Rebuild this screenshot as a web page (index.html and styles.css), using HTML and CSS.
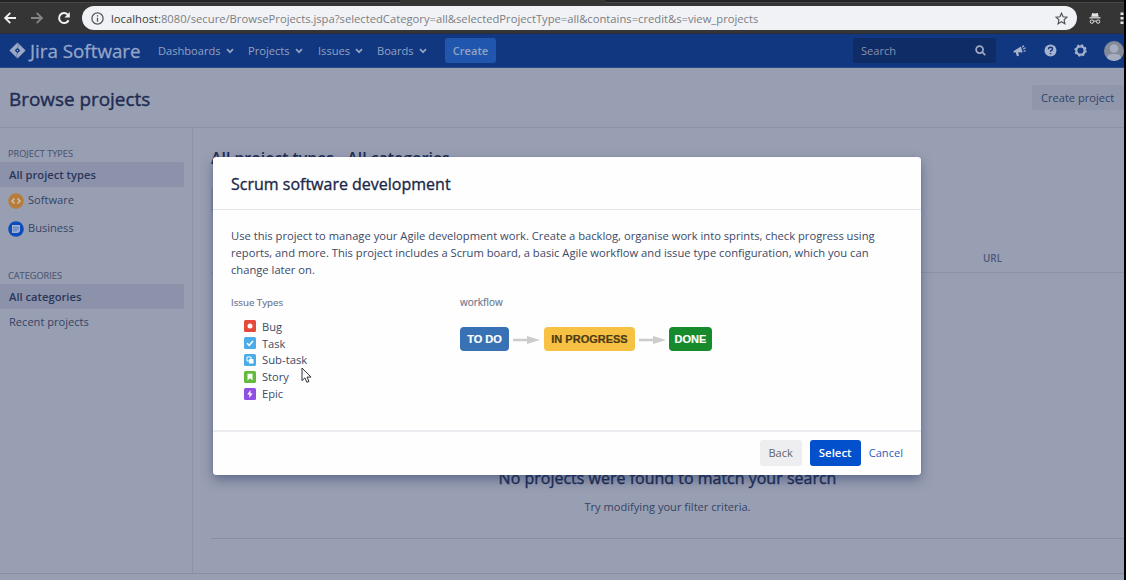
FILE: index.html
```html
<!DOCTYPE html>
<html lang="en">
<head>
<meta charset="utf-8">
<title>Browse projects - Jira Software</title>
<link rel="stylesheet" href="styles.css">
</head>
<body>
<div class="screen">
  <div class="tabs"><div class="active-tab"></div></div>
  <div class="browser">
    <svg class="nav-arrow" width="14" height="14" viewBox="0 0 14 14"><path d="M13 7H2.5M7.3 1.8L2.1 7l5.2 5.2"/></svg>
    <svg class="nav-arrow nav-forward" width="14" height="14" viewBox="0 0 14 14"><path d="M1 7h10.5M6.7 1.8L11.9 7l-5.2 5.2"/></svg>
    <svg class="nav-arrow nav-reload" width="14" height="14" viewBox="0 0 14 14"><path d="M11.6 9.2A5 5 0 1 1 10.7 3.6"/><path class="reload-tip" d="M12.8 1v5.4H7.4z"/></svg>
    <div class="address">
      <svg class="info" width="13" height="13" viewBox="0 0 13 13"><circle cx="6.5" cy="6.5" r="5.6"/><path d="M6.5 5.7v4M6.5 3.2v1.4"/></svg>
      <span class="url"><span class="url-host">localhost:</span>8080/secure/BrowseProjects.jspa?selectedCategory=all&amp;selectedProjectType=all&amp;contains=credit&amp;s=view_projects</span>
      <svg class="star" width="13" height="13" viewBox="0 0 13 13"><path d="M6.5 1.2l1.6 3.6 3.9.4-2.9 2.6.8 3.9-3.4-2-3.4 2 .8-3.9L1 5.2l3.9-.4z"/></svg>
    </div>
    <svg class="incognito" width="12" height="13" viewBox="0 0 12 13"><path d="M3.2 1l2.8.6L8.8 1l1 3.7H2.2z"/><path d="M.5 5.200h11v1.200H.5z"/><g fill="none" stroke="#e4e4e6"><circle cx="2.900" cy="9.600" r="1.700"/><circle cx="9.100" cy="9.600" r="1.700"/><path d="M4.600 9.300q1.400-.8 2.800 0"/></g></svg>
    <svg class="kebab" width="4" height="14" viewBox="0 0 4 14"><path d="M.5 1.500h3v2.500h-3zM.5 6h3v2.500h-3zM.5 10.500h3v2.500h-3z"/></svg>
  </div>

  <div class="topnav">
    <svg class="logo" width="17" height="17" viewBox="0 0 17 17"><path fill-rule="evenodd" d="M8.500.4L16.600 8.500 8.500 16.600.4 8.500zM8.500 5.700L5.700 8.500l2.800 2.800 2.800-2.800z"/><path d="M8.500 7.600l.9.9-.9.9-.9-.9z"/><path class="logo-cut" d="M8.500 1.200q2 2.600 0 4.800M8.500 15.800q-2-2.600 0-4.800"/></svg>
    <span class="brand">Jira Software</span>
    <span class="menu menu-dashboards">Dashboards<svg width="8" height="6" viewBox="0 0 8 6"><path d="M1 1.200l3 3 3-3"/></svg></span>
    <span class="menu menu-projects">Projects<svg width="8" height="6" viewBox="0 0 8 6"><path d="M1 1.200l3 3 3-3"/></svg></span>
    <span class="menu menu-issues">Issues<svg width="8" height="6" viewBox="0 0 8 6"><path d="M1 1.200l3 3 3-3"/></svg></span>
    <span class="menu menu-boards">Boards<svg width="8" height="6" viewBox="0 0 8 6"><path d="M1 1.200l3 3 3-3"/></svg></span>
    <span class="create">Create</span>
    <div class="search"><span>Search</span><svg width="11" height="11" viewBox="0 0 11 11"><circle cx="4.600" cy="4.600" r="3.500"/><path d="M7.200 7.200l3 3"/></svg></div>
    <svg class="tool feedback" width="13" height="13" viewBox="0 0 13 13"><path d="M.4 7.200L8 2.400l1.600 6.200-4.400-.3.800 3.500-2 .4-1.400-4-1.700.5z"/><path class="rays" d="M9.300 3.300l1.500-1.800M10.200 5l2.400-1.300M10.600 6.800l2 .1"/></svg>
    <svg class="tool help" width="13" height="13" viewBox="0 0 13 13"><circle cx="6.500" cy="6.500" r="6"/><path class="query" d="M4.500 5.200q0-1.900 2-1.900t2 1.700q0 1-1.200 1.500-.8.400-.8 1.300M6.500 8.900v1.400"/></svg>
    <svg class="tool gear" width="13" height="13" viewBox="0 0 13 13"><circle cx="6.500" cy="6.500" r="4.200"/><circle class="teeth" cx="6.500" cy="6.500" r="5.500"/></svg>
    <svg class="avatar" width="20" height="20" viewBox="0 0 20 20"><circle class="avatar-bg" cx="10" cy="10" r="10"/><circle cx="10" cy="7.500" r="4.300"/><path d="M2.800 16.900q.8-4 5.200-4h4q4.400 0 5.200 4Q14 20 10 20t-7.200-3.100z"/></svg>
  </div>

  <div class="page-head">
    <h1>Browse projects</h1>
    <span class="create-project">Create project</span>
  </div>

  <div class="columns">
    <div class="sidebar">
      <div class="group">PROJECT TYPES</div>
      <div class="entry current">All project types</div>
      <div class="entry typed"><svg width="16" height="16" viewBox="0 0 16 16"><circle cx="8" cy="8" r="7.800" fill="#b67d3c"/><path class="glyph" d="M6.500 5.500L4 8l2.500 2.500M9.500 5.500L12 8l-2.500 2.500"/></svg>Software</div>
      <div class="entry typed business"><svg width="16" height="16" viewBox="0 0 16 16"><circle cx="8" cy="8" r="7.800" fill="#0b4dbb"/><path d="M4 4h8v6.200L10 12H4z" fill="#a2afcf"/><path d="M5 6.200h6M5 8h6M5 9.800h4" stroke="#2a5cb8" stroke-width=".6"/></svg>Business</div>
      <div class="group categories">CATEGORIES</div>
      <div class="entry current">All categories</div>
      <div class="entry recent">Recent projects</div>
    </div>
    <div class="main">
      <h2>All project types - All categories</h2>
      <div class="filter"></div>
      <div class="table-head"><span>URL</span></div>
      <div class="empty">
        <div class="empty-title">No projects were found to match your search</div>
        <div class="empty-hint">Try modifying your filter criteria.</div>
      </div>
    </div>
  </div>
  <div class="footer"></div>

  <div class="dialog">
    <div class="dialog-head">Scrum software development</div>
    <div class="dialog-body">
      <p>Use this project to manage your Agile development work. Create a backlog, organise work into sprints, check progress using<br>reports, and more. This project includes a Scrum board, a basic Agile workflow and issue type configuration, which you can<br>change later on.</p>
      <div class="details">
        <div class="types">
          <div class="label label-types">Issue Types</div>
          <ul>
            <li><svg width="12" height="12" viewBox="0 0 12 12"><rect width="12" height="12" rx="1.500" fill="#e5493a"/><circle cx="6" cy="6" r="2.500" fill="#fff"/></svg>Bug</li>
            <li><svg width="12" height="12" viewBox="0 0 12 12"><rect width="12" height="12" rx="1.500" fill="#4bade8"/><path d="M3 6.200l2.200 2.100L9 3.900" fill="none" stroke="#fff" stroke-width="1.500"/></svg>Task</li>
            <li class="subtask"><svg width="12" height="12" viewBox="0 0 12 12"><rect width="12" height="12" rx="1.500" fill="#4bade8"/><path d="M5 7H3V3h4v2" fill="none" stroke="#fff"/><rect x="5" y="5" width="4.500" height="4.500" rx=".6" fill="#fff"/></svg>Sub-task</li>
            <li><svg width="12" height="12" viewBox="0 0 12 12"><rect width="12" height="12" rx="1.500" fill="#63ba3c"/><path d="M3.500 2.800h5v6.700L6 7.200 3.500 9.500z" fill="#fff"/></svg>Story</li>
            <li><svg width="12" height="12" viewBox="0 0 12 12"><rect width="12" height="12" rx="1.500" fill="#904ee2"/><path d="M6.600 2L3.200 6.600h2.300L5.200 10l3.600-4.600H6.400z" fill="#fff"/></svg>Epic</li>
          </ul>
        </div>
        <div class="workflow">
          <div class="label label-flow">workflow</div>
          <div class="flow">
            <span class="status todo">TO DO</span>
            <svg width="27" height="8" viewBox="0 0 27 8"><path d="M0 2.700h14V0l13 4-13 4V5.300H0z"/></svg>
            <span class="status progress">IN PROGRESS</span>
            <svg width="27" height="8" viewBox="0 0 27 8"><path d="M0 2.700h14V0l13 4-13 4V5.300H0z"/></svg>
            <span class="status done">DONE</span>
          </div>
        </div>
      </div>
    </div>
    <div class="dialog-foot">
      <span class="btn back">Back</span>
      <span class="btn select">Select</span>
      <span class="cancel">Cancel</span>
    </div>
  </div>
  <svg class="pointer" width="11" height="17" viewBox="0 0 11 17"><path d="M1 1v12.600l2.900-2.700 2 4.400 2.100-.9-2-4.300h4z"/></svg>
</div>
</body>
</html>
```

FILE: styles.css
```css
* { box-sizing: border-box; }
body { margin: 0; background: #000; font-family: "Open Sans", "Noto Sans", sans-serif; font-size: 11.1px; line-height: 17px; color: #344366; }
svg { display: block; flex: none; }
.screen { position: relative; display: flex; flex-direction: column; width: 1124px; height: 580px; overflow: hidden; background: #999fb2; }

/* Browser toolbar */
.tabs { flex: none; height: 3px; padding-left: 400px; background: #232324; border-bottom: 1px solid #48484a; }
.active-tab { width: 206px; height: 3px; background: #353536; }
.browser { display: flex; align-items: center; flex: none; height: 31px; padding: 0 0 0 3px; background: #353536; border-bottom: 1px solid #292d3c; }
.nav-arrow { fill: none; stroke: #f2f2f3; stroke-width: 1.8; }
.nav-forward { margin-left: 13px; stroke: #858587; }
.nav-reload { margin-left: 13px; stroke-width: 2; }
.reload-tip { fill: #f2f2f3; stroke: none; }
.address { display: flex; align-items: center; width: 995px; height: 24px; margin-left: 11px; padding: 0 9px 0 9px; border-radius: 12px; background: #f1f2f5; }
.info { fill: none; stroke: #56585c; stroke-width: 1.3; }
.url { margin-left: 7px; font-size: 11.23px; color: #7b7e83; white-space: nowrap; }
.url-host { color: #3b3d42; }
.star { margin-left: auto; fill: none; stroke: #515358; stroke-width: 1.2; }
.incognito { margin-left: 12px; fill: #e4e4e6; }
.kebab { margin-left: 19px; fill: #e4e4e6; }

/* Application navigation */
.topnav { display: flex; align-items: center; flex: none; height: 34px; padding-left: 9px; background: #10377f; border-bottom: 1px solid #2a4a8b; color: #94a2c2; white-space: nowrap; }
.logo { fill: #9ba9c7; }
.logo-cut { fill: none; stroke: #5f76a6; stroke-width: .8; }
.brand { width: 113px; margin-left: 4px; font-size: 18.8px; line-height: 24px; color: #95a5c8; -webkit-text-stroke: .3px currentColor; }
.menu { display: flex; align-items: center; justify-content: space-between; }
.menu svg { fill: none; stroke: #94a2c2; stroke-width: 1.7; }
.menu-dashboards { width: 76px; margin-left: 15px; }
.menu-projects { width: 55px; margin-left: 14px; }
.menu-issues { width: 45px; margin-left: 15px; }
.menu-boards { width: 50px; margin-left: 14px; }
.create { width: 51px; height: 25px; margin-left: 18px; border-radius: 3px; background: #2056ad; font-weight: 600; line-height: 25px; text-align: center; }
.search { display: flex; align-items: center; justify-content: space-between; width: 143px; height: 25px; margin-left: 357px; padding: 0 10px 0 8px; border-radius: 2px; background: #102c66; color: #8592b0; }
.search svg { fill: none; stroke: #a0abc3; stroke-width: 1.7; }
.tool { fill: #a7b3ce; }
.feedback { margin-left: 17px; }
.rays { stroke: #a7b3ce; stroke-width: 1.3; }
.help { margin-left: 18px; }
.query { fill: none; stroke: #10377f; stroke-width: 1.4; }
.gear { margin-left: 17px; fill: none; stroke: #a7b3ce; stroke-width: 2.2; }
.teeth { stroke-width: 1.4; stroke-dasharray: 2.2 2.12; }
.avatar { margin-left: 17px; fill: #a6adc0; }
.avatar-bg { fill: #858a9b; }

/* Page */
.page-head { display: flex; align-items: center; justify-content: space-between; flex: none; height: 60px; padding-left: 9px; border-bottom: 1px solid #8c92a6; }
h1 { margin: 2px 0 0; font-size: 18.9px; font-weight: 500; line-height: 26px; color: #202c52; -webkit-text-stroke: .4px currentColor; }
.create-project { width: 92px; height: 25px; padding-left: 9px; border-radius: 3px 0 0 3px; background: #9096ab; line-height: 25px; }
.columns { display: flex; flex: none; height: 445px; }
.sidebar { width: 193px; padding-top: 17px; border-right: 1px solid #8d93a7; }
.group { padding-left: 8px; font-size: 9.2px; line-height: 17px; color: #4d5876; -webkit-text-stroke: .15px currentColor; }
.entry { display: flex; align-items: center; height: 25px; padding-left: 9px; }
.current { width: 184px; border-radius: 0 2px 2px 0; background: #8c92a9; font-size: 11.2px; font-weight: 600; color: #29365c; }
.typed { gap: 4px; }
.typed svg { margin: 2px 0 0 -1px; }
.glyph { fill: none; stroke: #cfc7bd; stroke-width: 1.4; }
.business { margin-top: 3px; }
.categories { margin-top: 27px; }
.main { flex: 1; padding: 18px 0 0 18px; }
h2 { margin: 0; font-size: 15.85px; font-weight: 600; line-height: 24px; color: #202c52; }
.filter { width: 160px; height: 26px; margin-top: 17px; border-radius: 3px; background: #8c92a9; }
.table-head { height: 60px; border-bottom: 1px solid #8c92a5; padding: 37px 0 0 772px; font-size: 9.9px; font-weight: 600; color: #4d5876; }
.empty { height: 266px; padding-top: 193px; border-bottom: 1px solid #888ea3; text-align: center; }
.empty-title { font-size: 16px; font-weight: 500; line-height: 24px; color: #202c52; -webkit-text-stroke: .35px currentColor; }
.empty-hint { margin-top: 8px; }
.footer { flex: 1; border-top: 1px solid #898fa3; }

/* Dialog */
.dialog { position: absolute; left: 213px; top: 157px; display: flex; flex-direction: column; width: 708px; height: 318px; border-radius: 3px; background: #fefefe; box-shadow: 0 5px 12px rgba(20, 40, 90, .42), 0 0 1px rgba(20, 40, 90, .4); }
.dialog-head { height: 53px; padding: 15px 18px 0; border-bottom: 1px solid #e3e4e9; font-size: 16px; font-weight: 500; line-height: 24px; color: #1b2848; -webkit-text-stroke: .35px currentColor; }
.dialog-body { flex: 1; padding: 18px 18px 0; color: #3c4966; }
p { margin: 0; font-size: 11.2px; line-height: 16.8px; white-space: nowrap; }
.details { display: flex; margin-top: 15.6px; }
.types { width: 229px; }
.label { font-size: 9.7px; line-height: 17px; color: #6b768e; -webkit-text-stroke: .15px currentColor; }
.label-flow { font-size: 10px; }
ul { margin: 7px 0 0; padding: 0 0 0 13px; list-style: none; }
li { display: flex; align-items: center; gap: 6px; height: 16.8px; }
.subtask { font-size: 11.3px; }
.workflow { flex: 1; }
.flow { display: flex; align-items: center; margin-top: 16px; }
.flow svg { margin: 2px 4px 0 4px; fill: #cccccd; }
.status { height: 24px; border-radius: 4px; font: bold 11px/24px "Liberation Sans", Arial, sans-serif; text-align: center; color: #fff; -webkit-text-stroke: .2px currentColor; }
.todo { width: 49px; background: #3871b4; }
.progress { width: 91px; background: #f7c144; color: #4c3b14; }
.done { width: 43px; margin-left: -1px; background: #178a2c; }
.dialog-foot { display: flex; height: 45px; padding: 8px 18px 0 0; justify-content: flex-end; border-top: 2px solid #ebecf0; line-height: 25px; }
.btn { height: 26px; border-radius: 3px; text-align: center; }
.back { width: 42px; background: #eeeef0; color: #62656d; }
.select { width: 51px; margin-left: 8px; background: #0350cc; font-size: 11.4px; font-weight: 600; color: #fff; }
.cancel { margin-left: 8px; color: #2b5fbd; }
.pointer { position: absolute; left: 301px; top: 367px; fill: #fff; stroke: #333; stroke-width: 1; }
```
